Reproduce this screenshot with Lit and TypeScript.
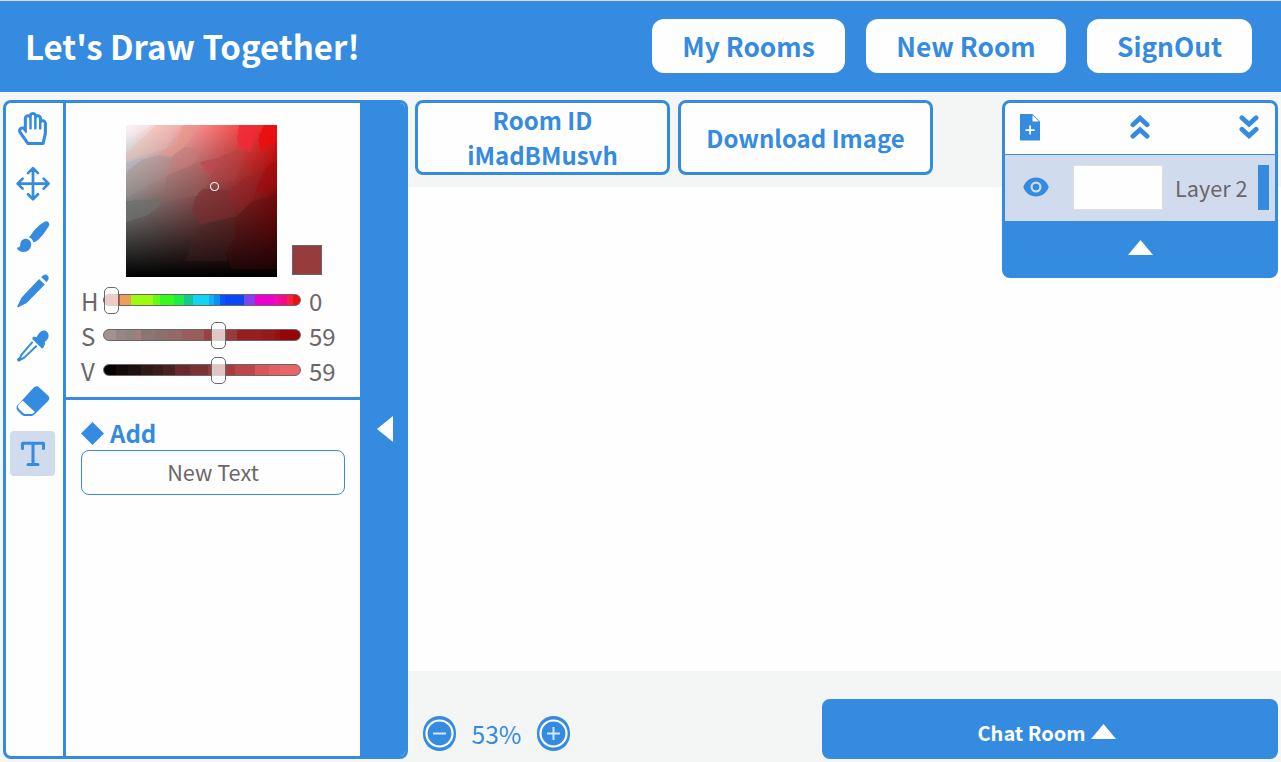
import { LitElement, html, svg, css } from "lit";
import { customElement, property, state } from "lit/decorators.js";

const FONT = css`"Noto Sans CJK JP", "Noto Sans", sans-serif`;

const tools = [
  {
    name: "hand",
    box: "10 106 45 45",
    art: svg`<svg x="18" y="112" width="29" height="33" viewBox="0 0 448 512"><path d="M372.57 112.641v-10.825c0-43.612-40.52-76.691-83.039-65.546-25.629-49.5-94.09-47.45-117.982.747C130.269 26.456 89.144 57.945 89.144 102v126.13c-19.953-7.427-43.308-5.068-62.083 8.871-29.355 21.796-35.794 63.333-14.55 93.153L132.48 498.569a32 32 0 0 0 26.062 13.432h222.897c14.904 0 27.835-10.289 31.182-24.813l30.184-130.958A203.637 203.637 0 0 0 448 310.564V179c0-40.62-35.523-71.992-75.43-66.359zm27.427 197.922c0 11.731-1.334 23.469-3.965 34.886L368.707 464h-201.92L51.591 302.303c-14.439-20.27 15.023-42.776 29.394-22.605l27.128 38.079c8.995 12.626 29.031 6.287 29.031-9.283V102c0-25.645 36.571-24.81 36.571.691V256c0 8.837 7.163 16 16 16h6.856c8.837 0 16-7.163 16-16V67c0-25.663 36.571-24.81 36.571.691V256c0 8.837 7.163 16 16 16h6.856c8.837 0 16-7.163 16-16V101.125c0-25.672 36.57-24.81 36.57.691V256c0 8.837 7.163 16 16 16h6.857c8.837 0 16-7.163 16-16v-76.309c0-26.242 36.57-25.64 36.57-.691v131.563z"/></svg>`,
  },
  {
    name: "move",
    box: "10 160.2 45 45",
    art: svg`<path class="line" d="M33 168.5v30.6M17.8 183.8h30.6M28 173.3l5-5 5 5M28 194.5l5 5 5-5M22.6 178.8l-5 5 5 5M43.6 178.8l5 5-5 5"/>`,
  },
  {
    name: "brush",
    box: "10 214.3 45 45",
    art: svg`<path d="M30.9 235.2C34 230.400 38.200 225.800 44 222.300c1.600-1 3.400-.9 4.400.2 1.200 1.200 1.200 2.900.2 4.300-3.400 5.600-7.200 10.800-11.600 14.200-1.300 1.100-2.600 1.200-3.800 1.300-.3-2.200-2-4.200-4.300-4.800z"/><path d="M25.8 239.100c3 0 5.400 2.500 5.400 5.500 0 4.500-3.300 7.700-7.800 7.700-2.600 0-5.200-1.400-6.400-3.500-.2-.7.2-1.100.9-1 1.500 0 2.300-.9 2.400-3 .1-3.300 2.400-5.700 5.500-5.700z"/>`,
  },
  {
    name: "pencil",
    box: "10 268.5 45 45",
    art: svg`<path d="M39.1 279.6l5.7 5.500-18.100 18.300-8.400 4.400c-.7.200-1.200-.3-1-1l4.300-8.900zM41.200 277.500l1.900-1.600c1.300-1.100 3.200-1.100 4.400.1 1.500 1.400 1.600 3.300.4 4.700l-1.300 2.100z"/>`,
  },
  {
    name: "eyedropper",
    box: "10 322.7 45 45",
    art: svg`<path d="M47.2 331.700c2.100 2.300 2 5.800-.3 8l-2.300 2.300c.8 1.300.5 2.700-.6 3.700l-.7 2-1.400.6-9.600-9.500.5-2.200c1.300-.5 2.700-.1 3.600.4l2.800-4.300c2.200-2.900 5.600-3.300 8-1z"/><path class="thin" d="M32.6 341.500L22 353.800c-1.300 1.500-1.300 3.400-3.300 6 2.600-1 4.600-1.400 6.100-3l11.900-11.400"/><circle cx="19" cy="359.4" r="1.900"/>`,
  },
  {
    name: "eraser",
    box: "10 376.8 45 45",
    art: svg`<path d="M34 387c1.700-1.400 3.700-1.400 5.300.2l8.600 8.200c1.900 1.800 1.900 3.700.2 5.400L34.700 414c-1.400 1.400-2.700 1.800-4.700 1.800h-4.400c-1.800 0-3.200-.5-4.500-1.800L18 410.800c-2-2-2-4.300-.1-6.200zM22.600 400.300l-3.400 3.400c-1.700 1.700-1.700 3.300-.2 5l3.300 3.400c1 1.200 2.200 1.800 3.700 1.800h4.400c1.700 0 2.600-.3 3.600-1.400l.9-.8z" fill-rule="evenodd"/>`,
  },
  {
    name: "text",
    box: "10 431 45 45",
    art: svg`<path class="serif" d="M22.5 448.5v-5.200h21v5.200M33 443.3v21.200M28 464.500h10"/>`,
  },
];

const hueStops: [string, number][] = [
  ["#c8503c", 8], ["#ef9d58", 14], ["#9cfb10", 25.2], ["#62fb14", 28.7], ["#36f920", 35.8],
  ["#1bef46", 40.9], ["#10ca90", 45.4], ["#13d4f3", 53.5], ["#0fb0f5", 56], ["#0a90f6", 59],
  ["#0756fa", 61.8], ["#0a47f5", 71.3], ["#8243ee", 77.2], ["#ea00cf", 86.5], ["#ef0bb5", 89.2],
  ["#f50a8c", 93.2], ["#f82045", 96.6], ["#e91014", 100],
];
const satStops: [string, number][] = [
  ["#a29290", 6], ["#998684", 11], ["#918381", 16], ["#a47e7b", 19], ["#8b7675", 26], ["#8d706e", 32],
  ["#936a68", 40], ["#9a5d5b", 51], ["#9a4040", 62], ["#9b3a3a", 68], ["#951f22", 80], ["#961a1c", 87],
  ["#9a1012", 90], ["#930708", 100],
];
const valStops: [string, number][] = [
  ["#030101", 6], ["#120909", 12], ["#1d100f", 19], ["#301718", 25], ["#3c1b1c", 30], ["#482122", 36],
  ["#6b292b", 44], ["#7b3031", 53], ["#963c3c", 62], ["#a83d3f", 67], ["#bd464b", 77], ["#d9575b", 84],
  ["#e46062", 90], ["#e76768", 100],
];

const bands = (stops: [string, number][]) => {
  let from = 0;
  const parts = stops.map(([color, to]) => {
    const part = `${color} ${from}% ${to}%`;
    from = to;
    return part;
  });
  return `background:linear-gradient(90deg,${parts.join(",")})`;
};

@customElement("hsv-slider")
export class HsvSlider extends LitElement {
  @property() label = "";
  @property({ type: Number }) value = 0;
  @property({ type: Number }) max = 100;
  @property({ attribute: false }) stops: [string, number][] = [];

  static styles = css`
    :host { display: grid; grid-template-columns: 22px 198px 1fr; align-items: center; height: 35px; color: #6b6668; font: 24px/35px ${FONT}; }
    .name, .value { padding-top: 2px; line-height: 33px; }
    .value { padding-left: 8px; }
    .track { position: relative; height: 12px; box-sizing: border-box; border: 1px solid #6b6668; border-radius: 6px; }
    .thumb { position: absolute; top: -8px; width: 15px; height: 27px; box-sizing: border-box; border: 1px solid #6b6668; border-radius: 5px; background: rgba(255, 255, 255, 0.7); }
  `;

  render() {
    const left = (this.value / this.max) * 181.5;
    return html`
      <span class="name">${this.label}</span>
      <div class="track" style=${bands(this.stops)}><div class="thumb" style="left:${left.toFixed(1)}px"></div></div>
      <span class="value">${this.value}</span>
    `;
  }
}

@customElement("app-root")
export class AppRoot extends LitElement {
  @state() private tool = "text";

  static styles = css`
    :host { display: flex; flex-direction: column; width: 100%; height: 762px; box-sizing: border-box; border-top: 1px solid #d9dfe2; background: #f4f6f6; color: #358be0; font-family: ${FONT}; overflow: hidden; }
    * { box-sizing: border-box; }
    svg { display: block; fill: currentColor; }
    button { font: inherit; color: inherit; margin: 0; padding: 0; border: 0; background: none; }
    .header { height: 91px; flex: none; display: flex; align-items: center; padding: 0 29px 1px 25px; background: #358be0; }
    .title { margin: 0; flex: 1; color: #fff; font-size: 33px; font-weight: 700; line-height: 50px; white-space: nowrap; }
    .nav { display: flex; gap: 21px; }
    .nav button { height: 54px; border-radius: 12px; background: #fefefe; font-size: 26.3px; font-weight: 700; padding-bottom: 2px; }
    .rooms { width: 193px; }
    .new { width: 200px; }
    .out { width: 165px; }
    .work { flex: 1; display: flex; min-height: 0; }
    .side { width: 405px; margin: 8px 0 3px 3px; display: flex; border: 3px solid #358be0; border-radius: 8px; background: #fefefe; overflow: hidden; }
    .tools { width: 60px; border-right: 3px solid #358be0; padding: 3px 0 0 4px; display: flex; flex-direction: column; gap: 9.17px; }
    .tool { width: 45px; height: 45px; border-radius: 4px; }
    .tool.active { background: #d0dbed; }
    .line { fill: none; stroke: currentColor; stroke-width: 2.7; stroke-linecap: round; stroke-linejoin: round; }
    .thin { fill: none; stroke: currentColor; stroke-width: 2; stroke-linejoin: round; }
    .serif { fill: none; stroke: currentColor; stroke-width: 3; stroke-linecap: round; stroke-linejoin: round; }
    .panel { width: 294px; display: flex; flex-direction: column; }
    .picker { height: 297px; border-bottom: 3px solid #358be0; padding: 22px 0 0 15px; }
    .sv { display: flex; align-items: flex-end; gap: 15px; padding-left: 45px; height: 152px; margin-bottom: 5px; }
    .field { width: 151px; height: 152px; background: linear-gradient(to top, #000, transparent), linear-gradient(to right, #fff, #f01010); }
    .swatch { width: 30px; height: 30px; margin-bottom: 2px; border: 1px solid #6b6668; background: #963c3c; }
    .add { padding: 16px 15px 0; }
    .addhead { display: flex; align-items: center; gap: 6px; height: 34px; font-size: 24px; font-weight: 700; }
    .addhead span { padding-bottom: 2px; }
    .newtext { display: block; width: 264px; height: 45px; border: 1px solid #358be0; border-radius: 8px; font-size: 21.7px; color: #6b6668; padding-bottom: 2px; }
    .collapse { flex: 1; display: flex; align-items: center; justify-content: center; padding: 0 0 2px 5px; background: #358be0; color: #fff; }
    .stage { flex: 1; min-width: 0; display: grid; grid-template: minmax(0, 1fr) / minmax(0, 1fr); }
    .canvas { grid-area: 1 / 1; margin: 95px 0 91px; background: #fefefe; }
    .over { grid-area: 1 / 1; display: flex; flex-direction: column; justify-content: space-between; padding: 8px 3px 3px 7px; }
    .top { display: flex; align-items: flex-start; gap: 8px; }
    .box { width: 255px; height: 75px; border: 3px solid #358be0; border-radius: 8px; background: #fefefe; display: flex; flex-direction: column; align-items: center; justify-content: center; font-size: 24px; line-height: 35px; font-weight: 700; }
    .room { padding-bottom: 1px; }
    .layers { width: 276px; height: 178px; margin-left: auto; border: 3px solid #358be0; border-radius: 8px; background: #358be0; overflow: hidden; display: flex; flex-direction: column; }
    .lhead { height: 52px; flex: none; background: #fefefe; border-bottom: 1px solid #358be0; display: flex; justify-content: space-between; padding: 0 16px 3px 14px; align-items: center; }
    .layer { height: 66px; flex: none; background: #d0dbed; display: flex; align-items: center; padding: 0 6px 2px 18px; color: #6b6668; font-size: 21.7px; }
    .eye { color: #358be0; margin-right: 24px; }
    .thumb { width: 90px; height: 45px; border: 1px solid #dedfe3; background: #fefefe; }
    .lname { flex: 1; padding: 1px 0 0 12px; white-space: nowrap; }
    .opacity { width: 11px; height: 45px; background: #358be0; }
    .fold { flex: 1; display: flex; align-items: center; justify-content: center; padding: 0 0 2px 1px; color: #fff; }
    .bottom { display: flex; justify-content: space-between; align-items: flex-end; }
    .zoom { display: flex; align-items: center; height: 51px; padding-left: 8px; }
    .pct { width: 81px; text-align: center; font-size: 24.5px; }
    .chat { width: 456px; height: 60px; display: flex; align-items: center; justify-content: center; gap: 5px; border-radius: 8px; background: #358be0; color: #fff; font-size: 20px; font-weight: 700; padding: 7px 7px 0 0; }
    .chat svg { margin-bottom: 3px; }
  `;

  private field() {
    return html`<svg class="field" viewBox="0 0 151 152" shape-rendering="crispEdges">
      <path fill="#f22838" opacity=".8" d="M113 0h18l-2 14-4 9-1 4-6-3-5-1-2-10z" />
      <path fill="#ea0e10" opacity=".9" d="M138 0h13v17l-12 4-4 5-3-12z" />
      <path fill="#a00a0c" opacity=".5" d="M151 37l-8 2-10 17-4 12 22-4z" />
      <path fill="#b04042" opacity=".45" d="M74 37l17-4 22-9 2 12-6 20-24-1-3-10z" />
      <path fill="#c04858" opacity=".6" d="M73 37l14-2 6 4-8 11-8-5z" />
      <path fill="#e49888" opacity=".6" d="M57 0h16l-12 20-15 11-12-1 16-12z" />
      <path fill="#e8bcae" opacity=".4" d="M30 0h25L40 24 12 32 0 36V28z" />
      <path fill="#c17b77" opacity=".5" d="M47 30l12-8 12 2 1 10-6 5-26 12 5-17z" />
      <path fill="#f7e6ed" opacity=".5" d="M0 0h26l-12 8L0 14z" />
      <path fill="#b5abc0" opacity=".5" d="M0 38l14-5 4 3L0 50z" />
      <path fill="#a08e8d" opacity=".4" d="M0 47l17-13 16-4 13 3-5 17-18 10-23 13z" />
      <path fill="#916765" opacity=".3" d="M41 50l31-12 10 18-7 14-34 6-4-2z" />
      <path fill="#6c716d" opacity=".7" d="M0 76l14-1 22-1-4 8-10 8-22 7z" />
      <path fill="#7b2c2f" opacity=".55" d="M76 64l27 1v10l8 16-27 6-10 3-8-14 3-13z" />
      <path fill="#962427" opacity=".4" d="M103 65l19-15 9 3-2 20-17 16-9-14z" />
      <path fill="#540c0e" opacity=".25" d="M110 92l15-15 26-8v75h-46l-5-18 7-12z" />
      <path fill="#4a2526" opacity=".3" d="M74 100l36-8-1 20-9 14 1 10H60l6-20z" />
      <circle cx="88.5" cy="61.5" r="4" fill="none" stroke="#fff" stroke-width="1.1" shape-rendering="auto" />
    </svg>`;
  }

  render() {
    return html`
      <header class="header">
        <h1 class="title">Let's Draw Together!</h1>
        <nav class="nav">
          <button class="rooms">My Rooms</button>
          <button class="new">New Room</button>
          <button class="out">SignOut</button>
        </nav>
      </header>
      <main class="work">
        <aside class="side">
          <div class="tools">
            ${tools.map(
              (t) => html`<button class="tool ${this.tool === t.name ? "active" : ""}" @click=${() => (this.tool = t.name)}>
                <svg width="45" height="45" viewBox=${t.box}>${t.art}</svg>
              </button>`
            )}
          </div>
          <div class="panel">
            <section class="picker">
              <div class="sv">${this.field()}<div class="swatch"></div></div>
              <hsv-slider label="H" .value=${0} .max=${360} .stops=${hueStops}></hsv-slider>
              <hsv-slider label="S" .value=${59} .stops=${satStops}></hsv-slider>
              <hsv-slider label="V" .value=${59} .stops=${valStops}></hsv-slider>
            </section>
            <section class="add">
              <div class="addhead">
                <svg width="23" height="23" viewBox="0 0 23 23"><path d="M11.5 0L23 11.5 11.5 23 0 11.5z" /></svg>
                <span>Add</span>
              </div>
              <button class="newtext">New Text</button>
            </section>
          </div>
          <div class="collapse"><svg width="16" height="26" viewBox="0 0 16 26"><path d="M16 0v26L0 13z" /></svg></div>
        </aside>
        <section class="stage">
          <div class="canvas"></div>
          <div class="over">
            <div class="top">
              <div class="box room"><span>Room ID</span><span>iMadBMusvh</span></div>
              <div class="box"><span>Download Image</span></div>
              <div class="layers">
                <div class="lhead">
                  <svg width="22" height="27" viewBox="0 0 22 27"><path fill-rule="evenodd" d="M1 0h12.5l7.500 7.500V26.500H1zM13.500 1.300v6.200H20zM10.200 11.500v3.700H6.500v1.700h3.700v3.700h1.800v-3.700h3.700v-1.700H12v-3.700z" /></svg>
                  <svg width="20" height="24" viewBox="0 0 20 24"><path fill="none" stroke="currentColor" stroke-width="4.8" stroke-linecap="round" d="M2.900 9.700l7.100-6.500 7.100 6.500M2.900 21.200l7.100-6.500 7.100 6.500" /></svg>
                  <svg width="20" height="24" viewBox="0 0 20 24"><path fill="none" stroke="currentColor" stroke-width="4.8" stroke-linecap="round" d="M2.900 2.800l7.100 6.500 7.100-6.500M2.900 14.300l7.100 6.500 7.100-6.500" /></svg>
                </div>
                <div class="layer">
                  <svg class="eye" width="26" height="20" viewBox="0 0 26 20"><path fill-rule="evenodd" d="M13 .5c6 0 10.700 3.800 12.700 9.500-2 5.700-6.700 9.500-12.700 9.500S2.300 15.700.3 10C2.300 4.300 7 .5 13 .5zM13 4.500a5.500 5.500 0 1 0 0 11 5.500 5.500 0 0 0 0-11zM13 6.700a3.300 3.300 0 1 1 0 6.600 3.300 3.300 0 0 1 0-6.600z" /></svg>
                  <div class="thumb"></div>
                  <span class="lname">Layer 2</span>
                  <div class="opacity"></div>
                </div>
                <div class="fold"><svg width="25" height="15" viewBox="0 0 25 15"><path d="M12.5 0L25 15H0z" /></svg></div>
              </div>
            </div>
            <div class="bottom">
              <div class="zoom">
                <svg width="33" height="35" viewBox="0 0 33 35"><rect width="33" height="35" rx="16.5" /><circle cx="16.5" cy="17.5" r="13" fill="none" stroke="#fff" stroke-width="2.2" /><path stroke="#d5e6f8" stroke-width="2" d="M10 17.5h13" /></svg>
                <span class="pct">53%</span>
                <svg width="33" height="35" viewBox="0 0 33 35"><rect width="33" height="35" rx="16.5" /><circle cx="16.5" cy="17.5" r="13" fill="none" stroke="#fff" stroke-width="2.2" /><path stroke="#d5e6f8" stroke-width="2" d="M10 17.5h13M16.5 11v13" /></svg>
              </div>
              <button class="chat"><span>Chat Room</span><svg width="25" height="15" viewBox="0 0 25 15"><path d="M12.5 0L25 15H0z" /></svg></button>
            </div>
          </div>
        </section>
      </main>
    `;
  }
}
